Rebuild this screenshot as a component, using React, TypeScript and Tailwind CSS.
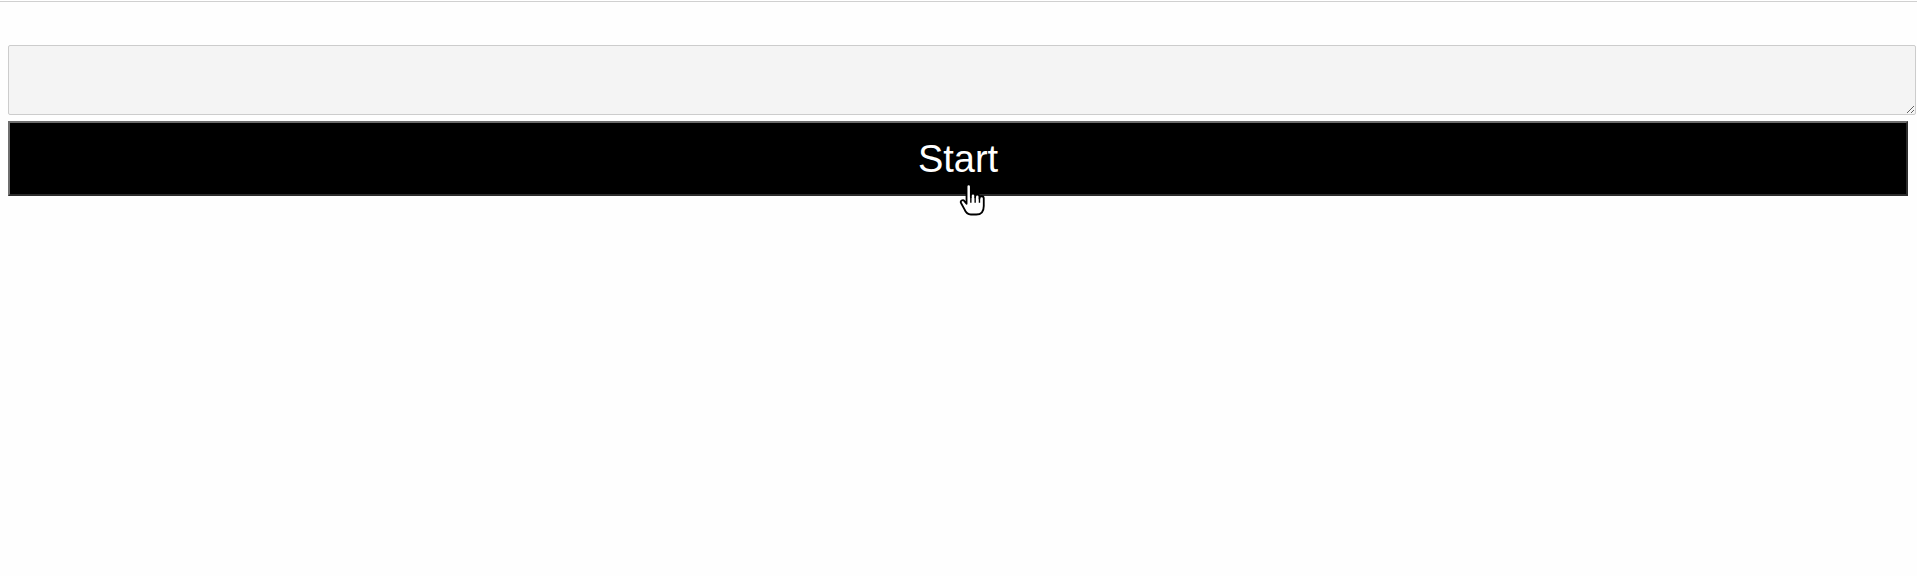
import { useState } from 'react'

function HandCursor() {
    return (
        <svg
            className="absolute left-[959px] top-[182px] pointer-events-none"
            width="28"
            height="34"
            viewBox="0 0 26 31"
        >
            <path
                d="M7,3 a2,2 0 0 1 4,0 V13 V11.5 a2,2 0 0 1 4,0 V13 V12.5 a2,2 0 0 1 4,0 V14 V14 a2,2 0 0 1 4,0 V21 Q23,29 16,29 H11 Q7,29 5,24 L2,18.5 a1.8,1.8 0 0 1 3,-2 L7,19 Z"
                fill="#fff"
                stroke="#000"
                strokeWidth="1.7"
                strokeLinejoin="round"
            />
            <path d="M11,13 V18 M15,13 V18 M19,14 V18" stroke="#000" strokeWidth="1.3" />
        </svg>
    )
}

export default function App() {
    const [text, setText] = useState('')

    return (
        <div className="relative min-h-[576px] bg-[#fefefe] font-['Liberation_Sans',Arial,sans-serif]">
            <div className="h-px mt-px bg-[#d0d0d0]" />

            <div className="flex flex-col pt-[43px] px-2 gap-[6px]">
                {/* Prompt box */}
                <textarea
                    value={text}
                    onChange={(e) => setText(e.target.value)}
                    className="block w-[1908px] h-[70px] bg-[#f4f4f4] border border-[#cccccc] rounded-[2px] outline-none resize"
                />

                {/* Start button */}
                <button className="w-[1900px] h-[75px] bg-black text-white text-[38px] leading-none border-2 border-t-[#6e6e6e] border-l-[#6e6e6e] border-b-[#2c2c2c] border-r-[#2c2c2c] cursor-pointer">
                    Start
                </button>
            </div>

            <HandCursor />
        </div>
    )
}
